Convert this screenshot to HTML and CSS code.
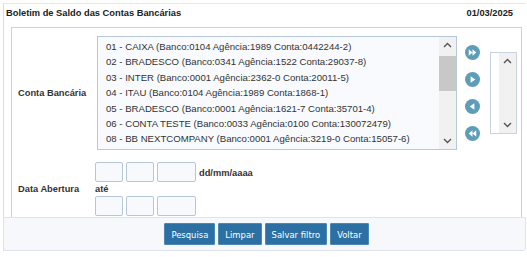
FILE: index.html
```html
<!DOCTYPE html>
<html lang="pt-BR">
<head>
    <meta charset="UTF-8">
    <title>Boletim de Saldo das Contas Bancárias</title>
    <link rel="stylesheet" href="styles.css">
</head>
<body>
    <div class="panel">
        <div class="panel-head">
            <span>Boletim de Saldo das Contas Bancárias</span>
            <span>01/03/2025</span>
        </div>

        <div class="form-box">
            <div class="row row-contas">
                <label class="lbl">Conta Bancária</label>
                <div class="contas">
                    <div class="lista">
                        <ul class="itens">
                            <li>01 - CAIXA (Banco:0104 Agência:1989 Conta:0442244-2)</li>
                            <li>02 - BRADESCO (Banco:0341 Agência:1522 Conta:29037-8)</li>
                            <li>03 - INTER (Banco:0001 Agência:2362-0 Conta:20011-5)</li>
                            <li>04 - ITAU (Banco:0104 Agência:1989 Conta:1868-1)</li>
                            <li>05 - BRADESCO (Banco:0001 Agência:1621-7 Conta:35701-4)</li>
                            <li>06 - CONTA TESTE (Banco:0033 Agência:0100 Conta:130072479)</li>
                            <li>08 - BB NEXTCOMPANY (Banco:0001 Agência:3219-0 Conta:15057-6)</li>
                        </ul>
                        <div class="barra">
                            <svg class="seta-barra" width="9" height="6" viewBox="0 0 9 6"><path d="M1 5 L4.5 1.5 L8 5" fill="none" stroke="#555" stroke-width="1.4"/></svg>
                            <div class="trilho"><div class="cursor"></div></div>
                            <svg class="seta-barra" width="9" height="6" viewBox="0 0 9 6"><path d="M1 1 L4.5 4.5 L8 1" fill="none" stroke="#555" stroke-width="1.4"/></svg>
                        </div>
                    </div>

                    <div class="setas">
                        <svg width="15" height="15" viewBox="0 0 16 16"><circle cx="8" cy="8" r="8" fill="#5e9db7"/><path d="M4 4.5 L8 8 L4 11.5 Z M8 4.5 L12 8 L8 11.5 Z" fill="#fff"/></svg>
                        <svg width="15" height="15" viewBox="0 0 16 16"><circle cx="8" cy="8" r="8" fill="#5e9db7"/><path d="M6 4.5 L11 8 L6 11.5 Z" fill="#fff"/></svg>
                        <svg width="15" height="15" viewBox="0 0 16 16"><circle cx="8" cy="8" r="8" fill="#5e9db7"/><path d="M10 4.5 L5 8 L10 11.5 Z" fill="#fff"/></svg>
                        <svg width="15" height="15" viewBox="0 0 16 16"><circle cx="8" cy="8" r="8" fill="#5e9db7"/><path d="M12 4.5 L8 8 L12 11.5 Z M8 4.5 L4 8 L8 11.5 Z" fill="#fff"/></svg>
                    </div>

                    <div class="selecionadas">
                        <div class="vazio"></div>
                        <div class="barra barra-vazia">
                            <svg class="seta-barra" width="9" height="6" viewBox="0 0 9 6"><path d="M1 5 L4.5 1.5 L8 5" fill="none" stroke="#555" stroke-width="1.4"/></svg>
                            <div class="trilho"></div>
                            <svg class="seta-barra" width="9" height="6" viewBox="0 0 9 6"><path d="M1 1 L4.5 4.5 L8 1" fill="none" stroke="#555" stroke-width="1.4"/></svg>
                        </div>
                    </div>
                </div>
            </div>

            <div class="row row-data">
                <label class="lbl">Data Abertura</label>
                <div class="datas">
                    <div class="data-linha">
                        <input class="dia" type="text">
                        <input class="mes" type="text">
                        <input class="ano" type="text">
                        <span class="fmt">dd/mm/aaaa</span>
                    </div>
                    <span class="ate">até</span>
                    <div class="data-linha">
                        <input class="dia" type="text">
                        <input class="mes" type="text">
                        <input class="ano" type="text">
                    </div>
                </div>
            </div>
        </div>

        <div class="rodape">
            <button>Pesquisa</button>
            <button>Limpar</button>
            <button>Salvar filtro</button>
            <button>Voltar</button>
        </div>
    </div>
</body>
</html>
```

FILE: styles.css
```css
body {
    margin: 0;
    font-family: "Liberation Sans", Arial, sans-serif;
    color: #333;
    background: #fff;
}

.panel {
    margin: 3px 1px 0 3px;
    border-left: 1px solid #d9dee6;
    border-top: 1px solid #e4e7eb;
}

.panel-head {
    display: flex;
    justify-content: space-between;
    align-items: center;
    padding: 0 13px 0 2px;
    height: 18px;
    font-size: 9.3px;
    font-weight: bold;
    color: #222;
}

.form-box {
    margin: 5px 4px 0 7px;
    border: 1px solid #c8d2e0;
    border-bottom: none;
    padding: 8px 0 1px 0;
}

.row {
    display: grid;
    grid-template-columns: 85px 1fr;
    align-items: center;
}

.lbl {
    padding-left: 6px;
    font-size: 9.3px;
    font-weight: bold;
    color: #333;
}

.contas {
    display: flex;
    align-items: center;
}

/* lista de contas */
.lista {
    display: flex;
    width: 360px;
    height: 114px;
    box-sizing: border-box;
    border: 1px solid #b8c8dc;
    background: #f8fafd;
    overflow: hidden;
}

.itens {
    flex: 1;
    list-style: none;
    margin: 0;
    padding: 2px 0 0 8px;
    font-size: 9.6px;
    line-height: 15.4px;
    color: #333;
    white-space: nowrap;
    overflow: hidden;
}

.barra {
    width: 17px;
    display: flex;
    flex-direction: column;
    align-items: center;
    background: #f1f1f1;
}

.seta-barra {
    margin: 5px 0;
}

.trilho {
    flex: 1;
    width: 100%;
}

.cursor {
    margin-top: 3px;
    height: 35px;
    background: #c8c8c8;
}

.setas {
    display: flex;
    flex-direction: column;
    gap: 12.3px;
    margin-left: 8px;
}

.selecionadas {
    display: flex;
    width: 27px;
    height: 82px;
    box-sizing: border-box;
    margin-left: 10px;
    border: 1px solid #c8d2e0;
    background: #fff;
}

.vazio {
    width: 8px;
}

.barra-vazia {
    flex: 1;
    width: auto;
}

/* datas */
.row-data {
    margin-top: 12px;
}

.datas {
    display: flex;
    flex-direction: column;
    align-items: flex-start;
    margin-left: -2px;
}

.data-linha {
    display: flex;
    align-items: flex-start;
    gap: 3px;
}

.data-linha input {
    height: 20px;
    box-sizing: border-box;
    border: 1px solid #b6c6da;
    border-radius: 2px;
    background: #f7f9fc;
    padding: 0;
}

.dia, .mes {
    width: 28px;
}

.ano {
    width: 39px;
}

.fmt, .ate {
    font-size: 9.3px;
    font-weight: bold;
    color: #333;
}

.fmt {
    margin-top: 6px;
}

.ate {
    height: 13px;
    line-height: 13px;
    margin-top: 1px;
}

/* rodape */
.rodape {
    display: flex;
    justify-content: center;
    gap: 3px;
    border: 1px solid #dde4ee;
    border-radius: 0 0 3px 3px;
    background: #f6f8fb;
    padding: 5px 0 5px 4px;
    margin-left: -1px;
}

.rodape button {
    background: #2b6fa3;
    color: #fff;
    border: 1px solid #4b87b8;
    border-radius: 1px;
    height: 22px;
    padding: 0 6px;
    font-family: "DejaVu Sans", Verdana, sans-serif;
    font-stretch: condensed;
    font-size: 9.4px;
    cursor: pointer;
}
```
